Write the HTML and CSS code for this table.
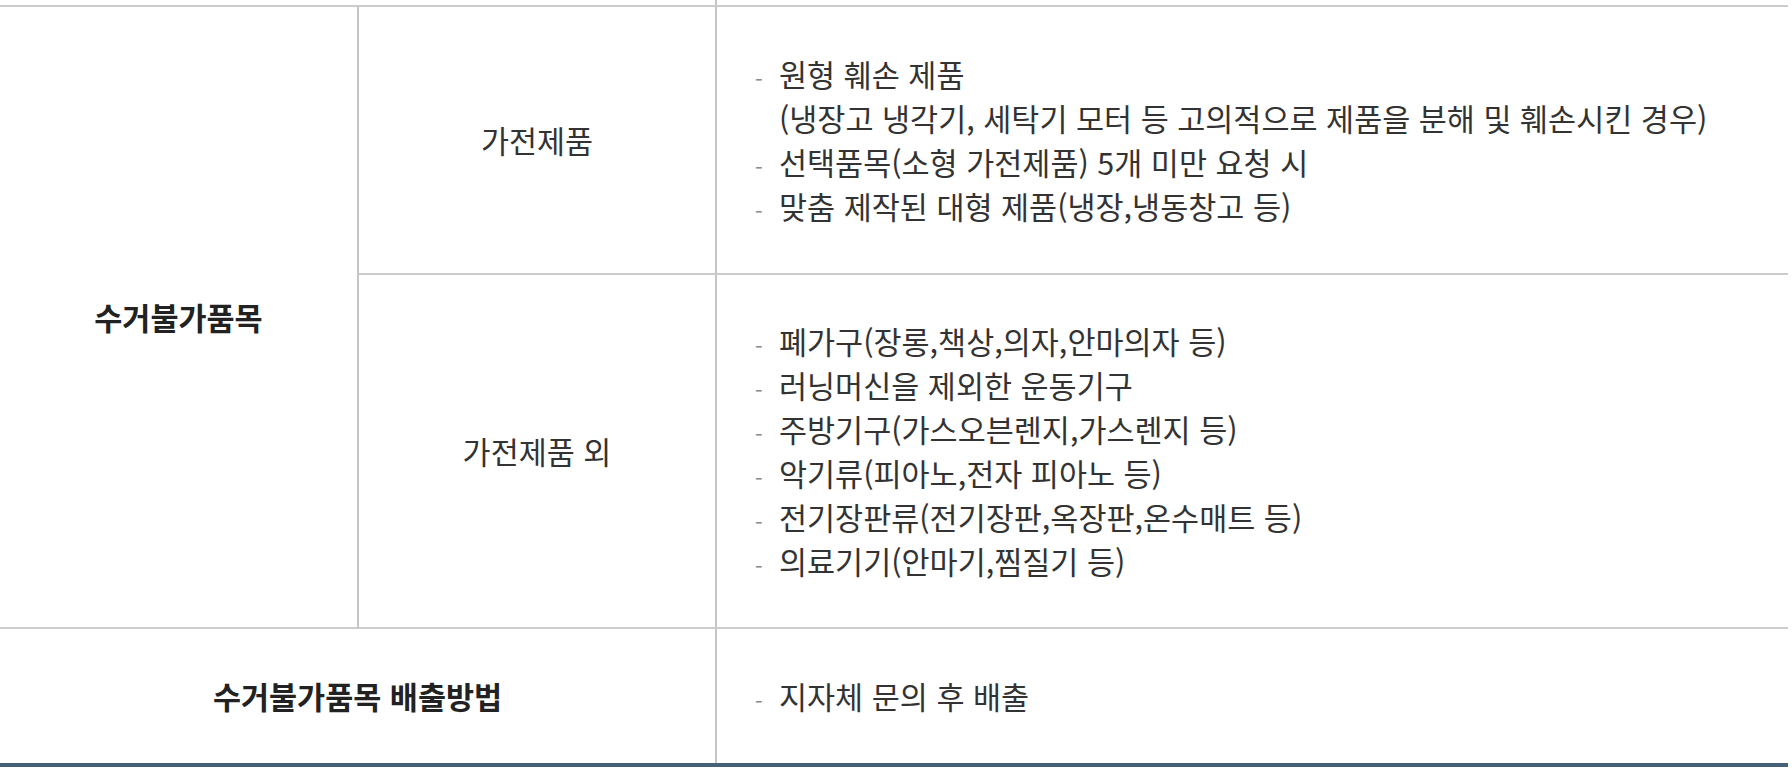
FILE: index.html
```html
<!DOCTYPE html>
<html lang="ko">
<head>
<meta charset="utf-8">
<title>수거불가품목</title>
<link rel="stylesheet" href="styles.css">
</head>
<body>
<table class="info">
  <colgroup>
    <col class="c1">
    <col class="c2">
    <col class="c3">
  </colgroup>
  <tr class="prev">
    <td colspan="2" class="first"></td>
    <td class="line"></td>
  </tr>
  <tr class="r1">
    <th rowspan="2" class="first head">수거불가품목</th>
    <td class="sub line">가전제품</td>
    <td class="desc line">
      <ul class="items">
        <li><span class="dash">-</span><span class="txt">원형 훼손 제품<br>(냉장고 냉각기, 세탁기 모터 등 고의적으로 제품을 분해 및 훼손시킨 경우)</span></li>
        <li><span class="dash">-</span><span class="txt">선택품목(소형 가전제품) 5개 미만 요청 시</span></li>
        <li><span class="dash">-</span><span class="txt">맞춤 제작된 대형 제품(냉장,냉동창고 등)</span></li>
      </ul>
    </td>
  </tr>
  <tr>
    <td class="sub line">가전제품 외</td>
    <td class="desc line">
      <ul class="items">
        <li><span class="dash">-</span><span class="txt">폐가구(장롱,책상,의자,안마의자 등)</span></li>
        <li><span class="dash">-</span><span class="txt">러닝머신을 제외한 운동기구</span></li>
        <li><span class="dash">-</span><span class="txt">주방기구(가스오븐렌지,가스렌지 등)</span></li>
        <li><span class="dash">-</span><span class="txt">악기류(피아노,전자 피아노 등)</span></li>
        <li><span class="dash">-</span><span class="txt">전기장판류(전기장판,옥장판,온수매트 등)</span></li>
        <li><span class="dash">-</span><span class="txt">의료기기(안마기,찜질기 등)</span></li>
      </ul>
    </td>
  </tr>
  <tr class="last">
    <th colspan="2" class="first head">수거불가품목 배출방법</th>
    <td class="desc line">
      <ul class="items">
        <li><span class="dash">-</span><span class="txt">지자체 문의 후 배출</span></li>
      </ul>
    </td>
  </tr>
</table>
</body>
</html>
```

FILE: styles.css
```css
html, body {
  margin: 0;
  padding: 0;
  background: #ffffff;
}

body {
  font-family: "Noto Sans CJK KR", "Noto Sans", sans-serif;
  color: #333333;
  font-size: 30.5px;
  line-height: 44px;
}

.info {
  width: 1788px;
  border-collapse: separate;
  border-spacing: 0;
  table-layout: fixed;
  border-bottom: 4px solid #456077;
  margin-bottom: 7px;
}

.c1 { width: 357px; }
.c2 { width: 358px; }

.info th,
.info td {
  padding: 44px 0;
  border-top: 2px solid #cccccc;
  vertical-align: middle;
}

.info .line {
  border-left: 2px solid #c3c5c9;
}

.info .prev td {
  padding: 0;
  height: 5px;
  border-top: 0;
}

.r1 td {
  padding-top: 45px;
  padding-bottom: 45px;
}

.head {
  font-weight: 700;
  color: #222222;
  text-align: center;
}

.sub {
  text-align: center;
  color: #333333;
}

.desc {
  padding-left: 38px !important;
  text-align: left;
}

.last th,
.last td {
  padding-top: 45px;
  padding-bottom: 45px;
}

.items {
  list-style: none;
  margin: 0;
  padding: 0;
}

.items li {
  display: flex;
  align-items: flex-start;
}

.dash {
  flex: 0 0 24px;
  color: #8a8a8a;
  font-size: 22px;
  line-height: 44px;
  transform: translateY(4px);
}

.txt {
  flex: 1 1 auto;
}
```
